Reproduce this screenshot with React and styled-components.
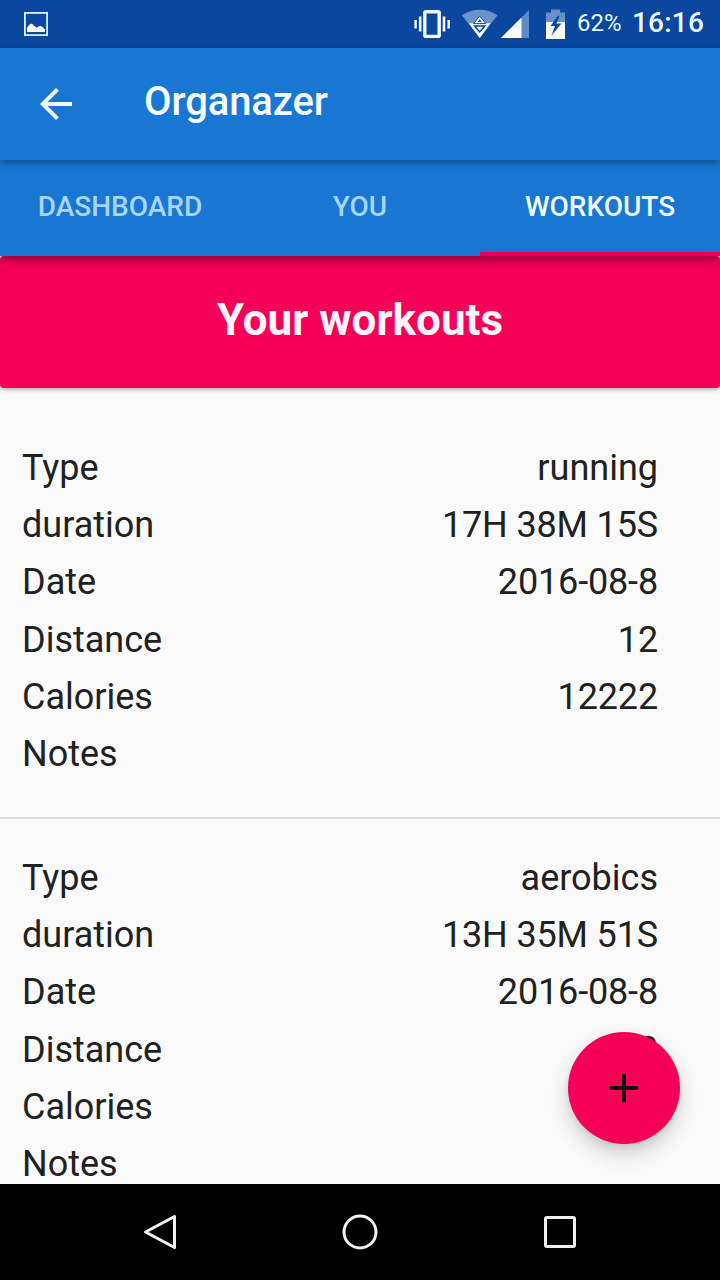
import React from 'react';
import styled, {createGlobalStyle} from 'styled-components';

const GlobalStyle = createGlobalStyle`
    * {
        box-sizing: border-box;
    }

    body {
        margin: 0;
        font-family: Roboto, "Liberation Sans", sans-serif;
        background-color: #fafafa;
    }
`;

const Screen = styled.div`
    display: flex;
    flex-direction: column;
    width: 720px;
    height: 1280px;
    overflow: hidden;
    background-color: #fafafa;
`;

const StatusBar = styled.header`
    display: flex;
    align-items: center;
    flex: 0 0 48px;
    padding: 0 16px 0 24px;
    background-color: #0b479f;
    color: #ecf8ff;

    svg {
        display: block;
    }
`;

const StatusIcons = styled.div`
    display: flex;
    align-items: center;
    margin-left: auto;
`;

const Battery = styled.span`
    width: 44px;
    margin-left: 11px;
    font-size: 24px;
    line-height: 46px;
    height: 48px;
    white-space: nowrap;
`;

const Clock = styled.span`
    margin-left: 11px;
    font-size: 28px;
    font-weight: 500;
    line-height: 46px;
    height: 48px;
    letter-spacing: 0.2px;
`;

const Toolbar = styled.div`
    display: flex;
    align-items: center;
    flex: 0 0 112px;
    padding: 0 32px;
    background-color: #1976d2;
    box-shadow: 0 2px 8px rgba(0, 0, 0, 0.4);
    z-index: 2;
`;

const BackButton = styled.button`
    display: flex;
    width: 48px;
    height: 48px;
    padding: 0;
    border: none;
    background: none;
`;

const AppTitle = styled.h1`
    margin: 0 0 4px 64px;
    font-size: 40px;
    font-weight: 500;
    line-height: 48px;
    letter-spacing: -0.1px;
    color: #f4fcff;
`;

const Tabs = styled.nav`
    display: grid;
    grid-template-columns: repeat(3, 1fr);
    flex: 0 0 96px;
    background-color: #1976d2;
    box-shadow: 0 3px 10px rgba(0, 0, 0, 0.45);
    z-index: 1;
`;

const Tab = styled.button`
    padding: ${({$active}) => ($active ? '2px 0 0' : '2px 0 4px')};
    border: none;
    border-bottom: ${({$active}) => ($active ? '4px solid #e5005b' : 'none')};
    background: none;
    font-family: inherit;
    font-size: 28px;
    font-weight: 500;
    line-height: 90px;
    text-align: center;
    color: ${({$active}) => ($active ? '#f0fbff' : '#a6d5f8')};
`;

const Content = styled.main`
    flex: 1;
    min-height: 0;
    overflow: hidden;
`;

const Heading = styled.h2`
    height: 132px;
    margin: 0 0 21px;
    border-radius: 4px;
    background-color: #f50057;
    box-shadow: 0 1px 4px rgba(0, 0, 0, 0.4);
    font-size: 44px;
    font-weight: 700;
    line-height: 128px;
    text-align: center;
    color: #fff4fa;
`;

const Workout = styled.section`
    height: 410px;
    padding: 30.6px 62px 0 22px;
    border-bottom: 2px solid #dcdcdc;
`;

const Row = styled.div`
    display: flex;
    justify-content: space-between;
    height: 57.33px;
    font-size: 36px;
    line-height: 57.33px;
    color: #212121;
`;

const Value = styled.span`
    letter-spacing: ${({$numeric}) => ($numeric ? '-0.15px' : 'normal')};
`;

const AddButton = styled.button`
    position: absolute;
    left: 568px;
    top: 1032px;
    display: flex;
    align-items: center;
    justify-content: center;
    width: 112px;
    height: 112px;
    padding: 0;
    border: none;
    border-radius: 50%;
    background-color: #f50057;
    box-shadow: 0 10px 20px rgba(0, 0, 0, 0.18), 0 2px 6px rgba(0, 0, 0, 0.08);
`;

const NavBar = styled.footer`
    display: flex;
    justify-content: center;
    align-items: center;
    gap: 160px;
    flex: 0 0 96px;
    background-color: #000;
    z-index: 3;
`;

const workouts = [
    {
        Type: 'running',
        duration: '17H 38M 15S',
        Date: '2016-08-8',
        Distance: '12',
        Calories: '12222',
        Notes: '',
    },
    {
        Type: 'aerobics',
        duration: '13H 35M 51S',
        Date: '2016-08-8',
        Distance: '2',
        Calories: '',
        Notes: '',
    },
];

const tabs = ['DASHBOARD', 'YOU', 'WORKOUTS'];

function PictureIcon() {
    return (
        <svg width="24" height="24" viewBox="0 0 24 24">
            <rect x="0.9" y="0.9" width="22.2" height="22.2" fill="none" stroke="#d9f1ff" strokeWidth="1.8"/>
            <path d="M3 20V15.5L5 13.2Q7.5 10.5 9.5 13.2L12.5 15.7Q16 12.5 19 15.5L21 17.5V20Z" fill="#fff"/>
        </svg>
    );
}

// vibrate, wifi, signal and battery share one strip
function SystemIcons() {
    return (
        <svg width="154" height="48" viewBox="412 0 154 48">
            <g fill="none" stroke="#f2fbff">
                <rect x="424.8" y="11.8" width="14.4" height="24.6" rx="1" strokeWidth="3.4"/>
                <path d="M420.2 16.5V31.5M444 16.5V31.5" strokeWidth="2.6"/>
                <path d="M415.6 20V28.5M448.7 20V28.5" strokeWidth="2.4"/>
            </g>
            <path d="M479.7 38L461.8 15.2Q479.7 4.5 497.5 15.2Z" fill="#6c93cb"/>
            <path d="M479.7 38L469 23.3H490.5Z" fill="#f6fcff"/>
            <path d="M479.7 16L485.8 23.6H473.6Z" fill="#f6fcff" stroke="#0b479f" strokeWidth="1"/>
            <path d="M479.7 19.2L481.8 22H477.6Z" fill="#0b479f"/>
            <path d="M474.5 26H484.9L479.7 31.8Z" fill="#f6fcff" stroke="#0b479f" strokeWidth="1.5"/>
            <path d="M501 38L529 10V38Z" fill="#5f8bc9"/>
            <path d="M501 38L521.5 17.5V38Z" fill="#fff"/>
            <path d="M546 12.6H551V9.5H560V12.6H565V22H546Z" fill="#6790ca"/>
            <path d="M546 22H565V39H546Z" fill="#fff"/>
            <path d="M558 15.5L550.5 26H555L551.5 35.5L561.5 23.5H556.3L559.5 16Z" fill="#0b479f"/>
        </svg>
    );
}

function WorkoutItem({workout}) {
    return (
        <Workout>
            {Object.entries(workout).map(([label, value]) => (
                <Row key={label}>
                    <span>{label}</span>
                    <Value $numeric={label !== 'Type'}>{value}</Value>
                </Row>
            ))}
        </Workout>
    );
}

function App() {
    return (
        <>
            <GlobalStyle/>
            <Screen>
                <StatusBar>
                    <PictureIcon/>
                    <StatusIcons>
                        <SystemIcons/>
                        <Battery>62%</Battery>
                        <Clock>16:16</Clock>
                    </StatusIcons>
                </StatusBar>
                <Toolbar>
                    <BackButton aria-label="Back">
                        <svg width="48" height="48" viewBox="0 0 24 24">
                            <path d="M20 11H7.83l5.59-5.59L12 4l-8 8 8 8 1.41-1.41L7.83 13H20v-2z" fill="#f0fbff"/>
                        </svg>
                    </BackButton>
                    <AppTitle>Organazer</AppTitle>
                </Toolbar>
                <Tabs>
                    {tabs.map((tab) => (
                        <Tab key={tab} $active={tab === 'WORKOUTS'}>{tab}</Tab>
                    ))}
                </Tabs>
                <Content>
                    <Heading>Your workouts</Heading>
                    {workouts.map((workout) => (
                        <WorkoutItem key={workout.Type} workout={workout}/>
                    ))}
                </Content>
                <NavBar>
                    <svg width="40" height="40" viewBox="0 0 40 40" fill="none" stroke="#f2f2f2" strokeWidth="3">
                        <path d="M34.5 4.5V35.5L5.5 20Z" strokeLinejoin="round"/>
                    </svg>
                    <svg width="40" height="40" viewBox="0 0 40 40" fill="none" stroke="#f2f2f2" strokeWidth="3">
                        <circle cx="20" cy="20" r="16"/>
                    </svg>
                    <svg width="40" height="40" viewBox="0 0 40 40" fill="none" stroke="#f2f2f2" strokeWidth="3">
                        <rect x="5.5" y="5.5" width="29" height="29" rx="1.5"/>
                    </svg>
                </NavBar>
                <AddButton aria-label="Add workout">
                    <svg width="48" height="48" viewBox="0 0 24 24">
                        <path d="M19 13h-6v6h-2v-6H5v-2h6V5h2v6h6v2z" fill="#16000a"/>
                    </svg>
                </AddButton>
            </Screen>
        </>
    );
}

export default App;
